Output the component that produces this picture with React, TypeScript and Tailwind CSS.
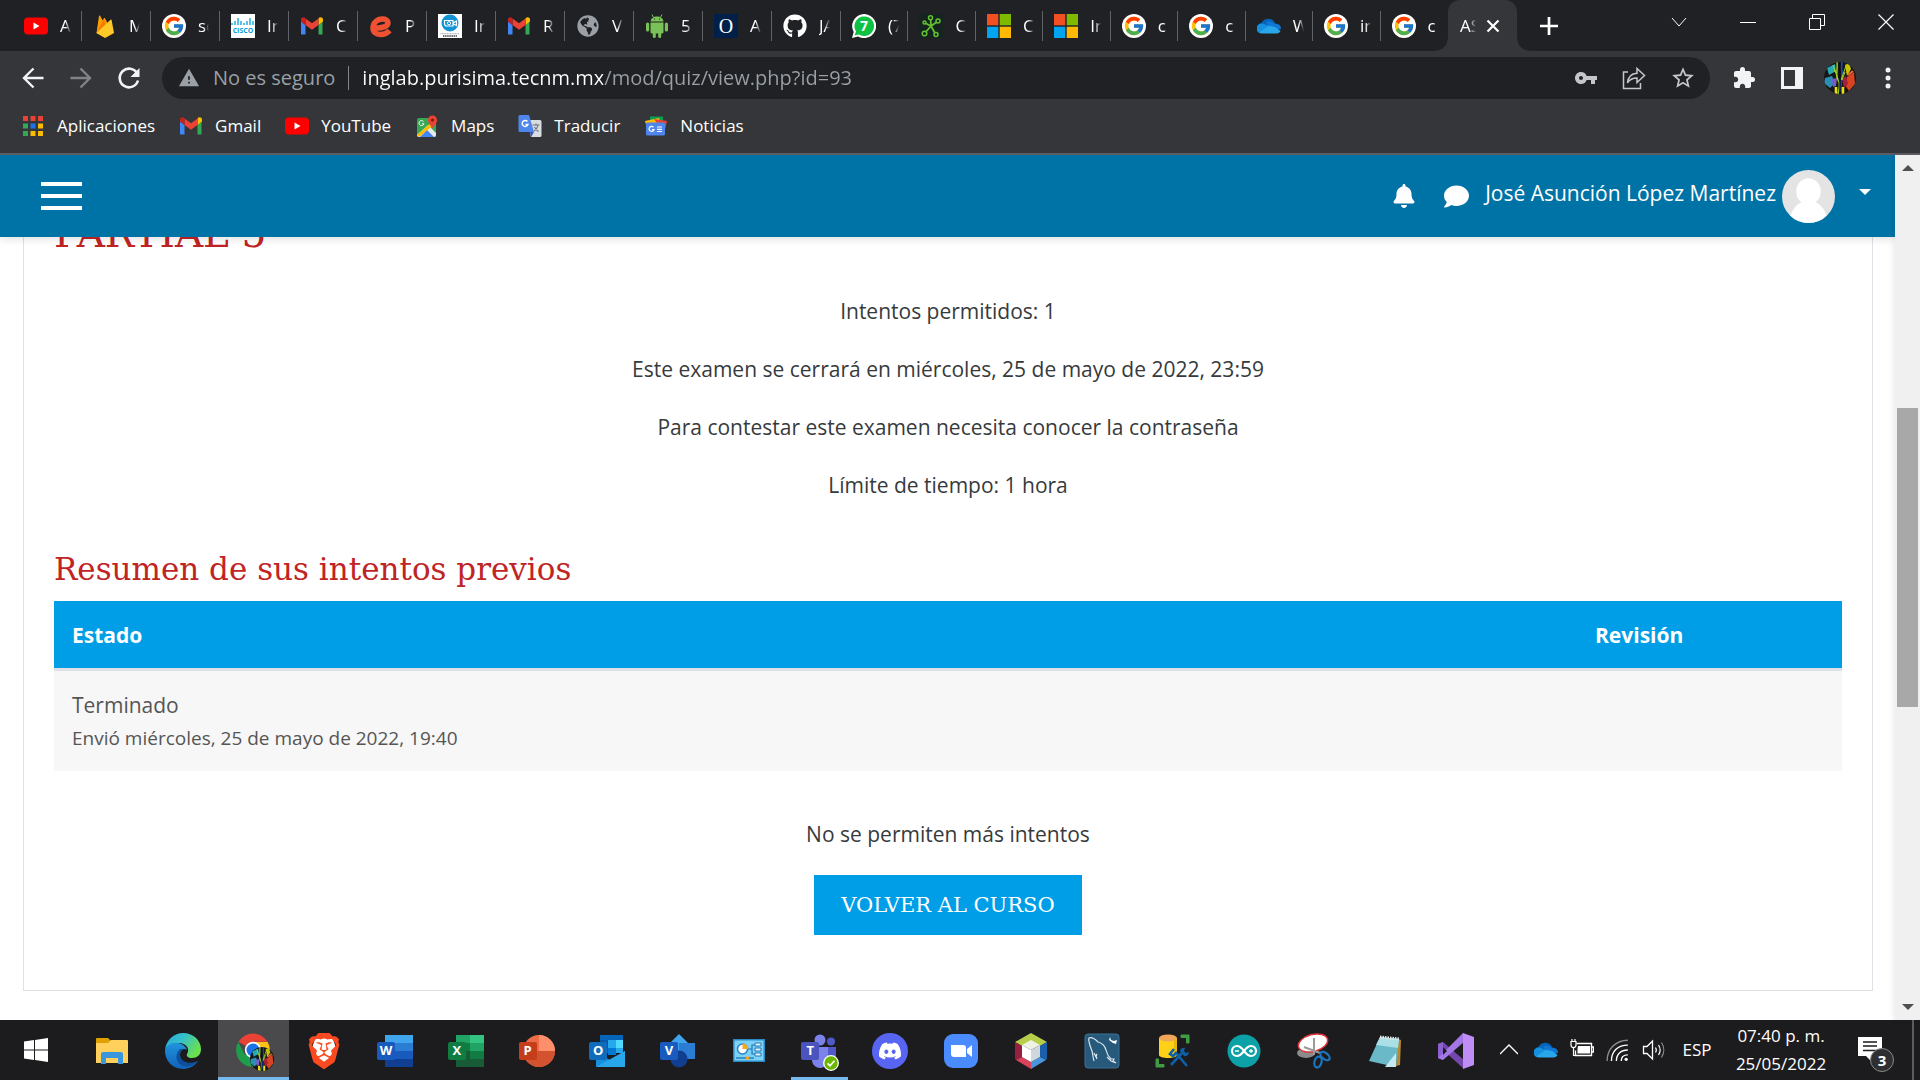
import React from "react";
import { FcGoogle } from "react-icons/fc";
import { FaBell, FaComment, FaDiscord, FaGithub, FaGlobeAmericas } from "react-icons/fa";
import { SiBrave } from "react-icons/si";
import { MdWarning, MdVpnKey, MdStarBorder, MdExtension } from "react-icons/md";

type Box = { children: React.ReactNode; className?: string; vb?: string };

function Svg({ children, className = "size-6", vb = "0 0 24 24" }: Box) {
  return (
    <svg viewBox={vb} className={className + " shrink-0"} fill="none" aria-hidden="true">
      {children}
    </svg>
  );
}

function App36({ children }: { children: React.ReactNode }) {
  return <Svg vb="0 0 36 36" className="size-9">{children}</Svg>;
}

/* ---------- favicons ---------- */

const YouTube = () => (
  <Svg>
    <rect x="0" y="3.500" width="24" height="17" rx="4" fill="#f00" />
    <path d="M9.500 8.500v7l6-3.500z" fill="#fff" />
  </Svg>
);
const Firebase = () => (
  <Svg>
    <path d="M3.500 19 6 2c.1-.6.8-.7 1.100-.2l2.600 4.800L11 4.300c.3-.5.8-.5 1 0L19.500 19 12 23.500z" fill="#ffa000" />
    <path d="M3.500 19 13.500 11 11 5.500 9.700 6.700z" fill="#f57c00" />
    <path d="M3.500 19 17.500 5.800c.4-.4 1-.2 1.100.3L21 19l-8 4.500c-.6.3-1.200.3-1.800 0z" fill="#ffca28" />
  </Svg>
);
const GoogleG = () => (
  <span className="flex size-6 shrink-0 items-center justify-center rounded-full bg-white">
    <FcGoogle className="size-[22px]" />
  </span>
);
const Cisco = () => (
  <span className="flex size-6 shrink-0 flex-col items-center justify-center bg-white">
    <Svg vb="0 0 24 10" className="h-[10px] w-6">
      <path d="M1 7v2M4 5v4M7 2v7M10 5v4M13 7v2M16 5v4M19 2v7M22 5v4" stroke="#049fd9" strokeWidth="1.300" />
    </Svg>
    <span className="text-[7px] leading-[9px] font-bold text-[#049fd9]">CISCO</span>
  </span>
);
const Gmail = () => (
  <Svg>
    <path d="M1.500 20.500h4V11L1 7.500V20z" fill="#4285f4" />
    <path d="M18.500 20.500h4V7.500L18.500 11z" fill="#34a853" />
    <path d="M18.500 4.500V11L23 7.500V5.500c0-2.200-2.500-3-4-1.800z" fill="#fbbc04" />
    <path d="M5.500 11V4.500L12 9.300l6.500-4.800V11L12 15.800z" fill="#ea4335" />
    <path d="M1 5.500v2L5.500 11V4.200L5 3.700C3.500 2.500 1 3.300 1 5.500z" fill="#c5221f" />
  </Svg>
);
const Swirl = () => (
  <Svg>
    <path d="M4 13.500C14 15 19 12 19 8.800 19 6.500 16.500 5 13.500 5 8 5 4 9 4 14c0 4 3 6.500 7.500 6.500 4 0 7-1.500 9-4" stroke="#f05133" strokeWidth="5.500" />
  </Svg>
);
const Camera = () => (
  <Svg>
    <rect width="24" height="24" fill="#fff" />
    <circle cx="12" cy="9" r="8.500" fill="#1193d4" />
    <path d="M6.500 6.500h8.500v5.500H9A2.500 2.500 0 0 1 6.500 9.500zM15.500 8.700l3-1.700v4.500l-3-1.500z" stroke="#fff" strokeWidth="1.200" />
    <circle cx="11" cy="9.200" r="1.600" stroke="#fff" />
    <path d="M2.500 19.700h19" stroke="#9aa0a6" strokeWidth="1" strokeDasharray="1 .6" />
    <path d="M5 22h14" stroke="#444" strokeWidth="1.500" strokeDasharray="1.500 .6" />
  </Svg>
);
const Android = () => (
  <Svg>
    <g fill="#78c257">
      <path d="M5.500 7.500C5.800 4.500 8.500 2.500 12 2.500s6.200 2 6.500 5z" />
      <path d="M5.500 8.500h13V18a1.500 1.500 0 0 1-1.500 1.500H7A1.500 1.500 0 0 1 5.500 18z" />
      <rect x="1" y="8.500" width="3.200" height="9" rx="1.600" />
      <rect x="19.800" y="8.500" width="3.200" height="9" rx="1.600" />
      <rect x="7.800" y="16" width="3" height="8" rx="1.500" />
      <rect x="13.200" y="16" width="3" height="8" rx="1.500" />
    </g>
    <path d="m8.500 3.500-1.500-3m8.500 3 1.500-3" stroke="#78c257" />
    <path d="M9 5h1m4 0h1" stroke="#202124" />
  </Svg>
);
const Oracle = () => (
  <span className="flex size-6 shrink-0 items-center justify-center bg-[#00204a] font-['Liberation_Serif',serif] text-[20px] leading-none text-white">O</span>
);
const WhatsApp = () => (
  <span className="relative flex size-6 shrink-0 items-center justify-center">
    <Svg>
      <path d="M0 24 1.700 18A12 12 0 1 1 6 22.400z" fill="#fff" />
      <path d="M2.500 21.500 4 17.500A9.800 9.800 0 1 1 7 20.500z" fill="#0fc143" />
    </Svg>
    <span className="absolute text-[14px] leading-none font-bold text-white">7</span>
  </span>
);
const Graph = () => (
  <Svg>
    <rect width="24" height="24" fill="#16241f" />
    <path d="M11.500 4 12 12 18.500 7.500M12 12l-6.500 7.500M12 12l4.500 8M12 12 6 9" stroke="#62c22f" strokeWidth="1.800" />
    <g stroke="#62c22f" strokeWidth="1.500" fill="#16241f">
      <circle cx="11.500" cy="3.800" r="2" /><circle cx="19" cy="7" r="2" /><circle cx="5.500" cy="19.500" r="2.300" /><circle cx="17" cy="20.500" r="2" /><circle cx="5.500" cy="8.500" r="1.500" />
    </g>
  </Svg>
);
const Microsoft = () => (
  <Svg>
    <path d="M0 0h11.300v11.300H0z" fill="#f25022" /><path d="M12.700 0H24v11.300H12.700z" fill="#7fba00" />
    <path d="M0 12.700h11.300V24H0z" fill="#00a4ef" /><path d="M12.700 12.700H24V24H12.700z" fill="#ffb900" />
  </Svg>
);
const OneDrive = () => (
  <Svg>
    <path d="M5 19a5 5 0 0 1-.5-10A7.500 7.500 0 0 1 17.500 8L20 12l-8 7z" fill="#0364b8" />
    <path d="M9 8.500c2.500-1.500 7-.5 8.500 1.500A5 5 0 0 1 24 15l-9 2z" fill="#0f78d4" />
    <path d="M5 19.500c-2.500 0-4.500-1.500-5-3.500l10-4.500 8 1.500 5.500 4c-.7 1.600-2 2.500-4 2.500z" fill="#28a8ea" />
    <path d="M0 15.500A4.800 4.800 0 0 1 5 9.500c2.500 0 4 1.500 6 3L2 18.500c-1-.7-1.700-1.800-2-3z" fill="#1490df" />
  </Svg>
);

type TabItem = { title: string; icon: React.ReactNode };
const firstTabs: TabItem[] = [
  { title: "A", icon: <YouTube /> },
  { title: "M", icon: <Firebase /> },
  { title: "so", icon: <GoogleG /> },
  { title: "In", icon: <Cisco /> },
  { title: "C", icon: <Gmail /> },
  { title: "P", icon: <Swirl /> },
  { title: "In", icon: <Camera /> },
  { title: "R", icon: <Gmail /> },
  { title: "V", icon: <FaGlobeAmericas className="size-[22px] shrink-0 text-[#9aa0a6]" /> },
  { title: "5", icon: <Android /> },
  { title: "A", icon: <Oracle /> },
  { title: "JA", icon: <FaGithub className="size-6 shrink-0 text-white" /> },
];
const lastTabs: TabItem[] = [
  { title: "(7", icon: <WhatsApp /> },
  { title: "C", icon: <Graph /> },
  { title: "C", icon: <Microsoft /> },
  { title: "In", icon: <Microsoft /> },
  { title: "c", icon: <GoogleG /> },
  { title: "c", icon: <GoogleG /> },
  { title: "W", icon: <OneDrive /> },
  { title: "in", icon: <GoogleG /> },
  { title: "c", icon: <GoogleG /> },
];

function Tab({ title, icon, last }: TabItem & { last?: boolean }) {
  return (
    <button className={"flex h-[30px] min-w-0 flex-1 items-center gap-3 border-r pl-[11px] " + (last ? "border-transparent" : "border-[#5f6368]")}>
      <span className="flex w-6 shrink-0 justify-center">{icon}</span>
      <span className="w-[11px] overflow-hidden [mask-image:linear-gradient(90deg,#000_50%,transparent)] text-left text-[17px] leading-6">{title}</span>
    </button>
  );
}

function TabStrip() {
  return (
    <div className="flex h-[51px] items-center bg-[#202124] pl-[13px]">
      <div className="flex w-[828px]">{firstTabs.map((t, i) => <Tab key={i} {...t} />)}</div>
      <div className="flex w-[607px]">{lastTabs.map((t, i) => <Tab key={i} {...t} last={i === 8} />)}</div>
      <div className="flex h-full items-end">
        <span className="-ml-3 size-3 bg-[radial-gradient(circle_at_0_0,transparent_11px,#35363a_12px)]" />
        <div className="flex h-full w-[69px] items-center gap-2 rounded-t-xl bg-[#35363a] pl-3">
          <span className="w-4 overflow-hidden [mask-image:linear-gradient(90deg,#000_60%,transparent)] text-[17px] leading-6">AS</span>
          <button aria-label="Cerrar pestaña">
            <Svg vb="0 0 18 18" className="size-[18px]"><path d="m3.500 3.500 11 11m0-11-11 11" stroke="#fff" strokeWidth="2.200" /></Svg>
          </button>
        </div>
        <span className="size-3 bg-[radial-gradient(circle_at_100%_0,transparent_11px,#35363a_12px)]" />
      </div>
      <button aria-label="Nueva pestaña" className="ml-2.5">
        <Svg vb="0 0 20 20" className="size-5"><path d="M10 1v18M1 10h18" stroke="#fff" strokeWidth="2.700" /></Svg>
      </button>
      <div className="ml-auto flex pb-2">
        <button aria-label="Buscar pestañas" className="flex w-[69px] justify-center">
          <Svg vb="0 0 16 16" className="size-4"><path d="m1 4 7 8 7-8" stroke="#fff" strokeWidth="1" /></Svg>
        </button>
        <button aria-label="Minimizar" className="flex w-[69px] justify-center">
          <Svg vb="0 0 16 16" className="size-4"><path d="M0 8.500h16" stroke="#fff" /></Svg>
        </button>
        <button aria-label="Restaurar" className="flex w-[69px] justify-center">
          <Svg vb="0 0 16 16" className="size-4"><path d="M.5 4.500h11v11H.5zM3.500 4.500v-4h12v11h-4" stroke="#fff" /></Svg>
        </button>
        <button aria-label="Cerrar" className="flex w-[69px] justify-center">
          <Svg vb="0 0 16 16" className="size-4"><path d="m.5.5 15 15m0-15-15 15" stroke="#fff" strokeWidth="1.200" /></Svg>
        </button>
      </div>
    </div>
  );
}

function Toolbar() {
  return (
    <div className="flex items-center pt-1.5 pr-2 pl-[21px]">
      <button aria-label="Atrás" className="mr-6">
        <Svg><path d="M22.500 12H3.500m9-9.500L3 12l9.500 9.500" stroke="#f1f3f4" strokeWidth="2.400" /></Svg>
      </button>
      <button aria-label="Adelante" className="mr-6">
        <Svg><path d="M1.500 12h19m-9-9.500L21 12l-9.500 9.500" stroke="#808387" strokeWidth="2.400" /></Svg>
      </button>
      <button aria-label="Volver a cargar" className="mr-[21px]">
        <Svg>
          <path d="M20.200 7.500A9.300 9.300 0 1 0 21 14.500" stroke="#f1f3f4" strokeWidth="2.600" />
          <path d="M22.500 2v9h-9z" fill="#f1f3f4" />
        </Svg>
      </button>
      <div className="flex h-[42px] flex-1 items-center rounded-full bg-[#202124] pr-3.5 pl-4">
        <MdWarning className="size-[22px] text-[#9aa0a6]" />
        <span className="ml-[13px] text-[20px] text-[#9aa0a6]">No es seguro</span>
        <span className="mx-[13px] h-6 w-px bg-[#80868b]" />
        <input
          aria-label="Dirección"
          defaultValue="inglab.purisima.tecnm.mx/mod/quiz/view.php?id=93"
          className="min-w-0 flex-1 bg-[linear-gradient(90deg,#fff_241px,#9aa0a6_241px)] bg-clip-text text-[20px] text-transparent outline-none"
        />
        <div className="flex items-center gap-6 text-[#c4c7ca]">
          <button aria-label="Contraseñas"><MdVpnKey className="size-6" /></button>
          <button aria-label="Compartir">
            <Svg>
              <path d="M6 6H1.500v16.500h17V17" stroke="currentColor" strokeWidth="1.500" />
              <path d="M5.500 17c.5-6 4-9.500 9.500-9.800V2.500l7.500 7-7.500 7V12c-4.500 0-7.500 1.500-9.500 5z" stroke="currentColor" strokeWidth="1.500" />
            </Svg>
          </button>
          <button aria-label="Marcador"><MdStarBorder className="size-[26px]" /></button>
        </div>
      </div>
      <div className="flex items-center pl-2.5 text-[#f1f3f4]">
        <button aria-label="Extensiones" className="flex w-12 justify-center"><MdExtension className="size-6" /></button>
        <button aria-label="Panel lateral" className="flex w-12 justify-center">
          <Svg vb="0 0 22 22" className="size-[22px]"><path d="M0 0h22v22H0z" fill="#f1f3f4" /><path d="M3 3h11v16H3z" fill="#35363a" /></Svg>
        </button>
        <button aria-label="Perfil" className="flex w-12 justify-center">
          <ProfileArt className="size-8" />
        </button>
        <button aria-label="Menú" className="flex w-12 justify-center">
          <Svg vb="0 0 6 24" className="h-6 w-1.5">
            <circle cx="3" cy="4" r="2.500" fill="#f1f3f4" /><circle cx="3" cy="12" r="2.500" fill="#f1f3f4" /><circle cx="3" cy="20" r="2.500" fill="#f1f3f4" />
          </Svg>
        </button>
      </div>
    </div>
  );
}

function ProfileArt({ className }: { className: string }) {
  return (
    <Svg vb="0 0 32 32" className={className + " rounded-full"}>
      <path d="M0 0h32v32H0z" fill="#161616" />
      <path d="M3 6 11 2l1 7-7 4z" fill="#25a9b5" />
      <path d="M1 16l7-2 3 7-5 5-6-5z" fill="#2b8fb5" />
      <path d="M8 17l5-1-1 8-3 1z" fill="#7b5ac8" />
      <path d="m21 3 4-2 2 6-4 7z" fill="#c9c400" />
      <path d="m23 15 7-5 1 12-6 7-4-6z" fill="#d84421" />
      <path d="m18 17 4-3 2 8-4 4z" fill="#a81f3a" />
      <path d="m24 13 5-4" stroke="#f0672f" strokeWidth="2" />
      <path d="M13 0c1 9-2 14 1 18s1 9 0 14" stroke="#8fc61a" strokeWidth="1.600" />
      <path d="M18 0c-2 8 2 12-1 20v10" stroke="#1a49c7" strokeWidth="1.800" />
      <path d="M12 25v7M19 25v7" stroke="#e9dc17" strokeWidth="2.600" />
      <path d="m9 3 5 14M22 4l-5 14M10 9l3 2M21 10l-3 8" stroke="#a9d321" strokeWidth="1" />
      <path d="M16 1v30" stroke="#0d0d0d" strokeWidth="1.200" />
    </Svg>
  );
}

const AppsIcon = () => (
  <Svg vb="0 0 20 20" className="size-5">
    {["#ea4335", "#ea4335", "#ea4335", "#34a853", "#1a73e8", "#fbbc04", "#34a853", "#fbbc04", "#fbbc04"].map((c, i) => (
      <rect key={i} x={(i % 3) * 7.500} y={Math.floor(i / 3) * 7.500} width="5" height="5" fill={c} />
    ))}
  </Svg>
);
const MapsIcon = () => (
  <Svg>
    <rect x="2" y="4" width="19" height="19" rx="2" fill="#34a853" />
    <path d="M2 21 13 11l8 8v2a2 2 0 0 1-2 2H4a2 2 0 0 1-2-2z" fill="#e8eaed" />
    <path d="m5 23 7-7 7 7z" fill="#4285f4" />
    <path d="M2 21 20 5l1 4L4 23z" fill="#fbbc04" />
    <path d="M17.500 15c-.5-3-4.500-5-4.500-9a4.500 4.500 0 1 1 9 0c0 4-4 6-4.500 9z" fill="#ea4335" />
    <circle cx="17.500" cy="6" r="1.600" fill="#7b1a12" />
    <path d="M8.500 7.500A2.500 2.500 0 1 0 9 9.800H7" stroke="#fff" strokeWidth="1" />
  </Svg>
);
const TranslateIcon = () => (
  <Svg>
    <path d="M9 6h13a1.500 1.500 0 0 1 1.500 1.500v14A1.500 1.500 0 0 1 22 23h-9z" fill="#d9dce0" />
    <path d="M2 1h9l5 17H2a1.500 1.500 0 0 1-1.500-1.500v-14A1.500 1.500 0 0 1 2 1z" fill="#4f86ec" />
    <path d="m12 18 4 0-3 5z" fill="#3b50c4" />
    <path d="M9.500 7.500A3 3 0 1 0 10 10.500H7.500" stroke="#fff" strokeWidth="1.400" />
    <path d="M14.500 11h7M18 9.500V11m2 0c-.5 3-2.500 5-4 6m.5-4c1 2 2.500 3.500 4 4.500" stroke="#69737d" strokeWidth="1.100" />
  </Svg>
);
const NewsIcon = () => (
  <Svg>
    <path d="M6 2.500h13v6H6z" fill="#0c9d58" />
    <path d="m1 7 14-3 2 6-14 4z" fill="#fbbc04" />
    <path d="m10 5 13 2-3 13z" fill="#ea4335" />
    <rect x="2" y="8.500" width="19" height="13" rx="1.500" fill="#4f86ec" />
    <path d="M9.500 13.200A2.500 2.500 0 1 0 10 15.500H8M13 13h5m-5 2.300h5M13 17.500h5" stroke="#fff" strokeWidth="1.200" />
  </Svg>
);

const bookmarks = [
  { label: "Aplicaciones", icon: <AppsIcon /> },
  { label: "Gmail", icon: <Gmail /> },
  { label: "YouTube", icon: <YouTube /> },
  { label: "Maps", icon: <MapsIcon /> },
  { label: "Traducir", icon: <TranslateIcon /> },
  { label: "Noticias", icon: <NewsIcon /> },
];

function Bookmarks() {
  return (
    <nav className="flex h-[54px] items-center gap-6 pl-[21px]">
      {bookmarks.map((b) => (
        <a key={b.label} href="#" className="flex items-center">
          <span className="mr-3 flex w-6 justify-center">{b.icon}</span>
          <span className="text-[17px] leading-6">{b.label}</span>
        </a>
      ))}
    </nav>
  );
}

/* ---------- page ---------- */

function SiteHeader() {
  return (
    <header className="relative z-10 flex h-[82px] shrink-0 items-center bg-[#0073a6] pr-6 pl-[41px] text-white shadow-[0_2px_8px_rgba(0,0,0,0.12)]">
      <button aria-label="Abrir menú" className="flex w-[41px] flex-col gap-2">
        <span className="h-1 bg-white" />
        <span className="h-1 bg-white" />
        <span className="h-1 bg-white" />
      </button>
      <div className="ml-auto flex items-center">
        <button aria-label="Notificaciones"><FaBell className="size-6" /></button>
        <button aria-label="Mensajes" className="ml-7"><FaComment className="size-[25px]" /></button>
        <button className="ml-4 flex items-center text-[21px]">
          <span className="pb-1">José Asunción López Martínez</span>
          <Svg vb="0 0 52 52" className="ml-1.5 size-[53px] rounded-full">
            <path d="M0 0h52v52H0z" fill="#e4e4e4" />
            <ellipse cx="26" cy="21" rx="12" ry="13" fill="#fff" />
            <path d="M7 52c1-12 7-19 14-21h10c7 2 13 9 14 21z" fill="#fff" />
          </Svg>
          <Svg vb="0 0 12 6" className="mb-2 ml-6 h-1.5 w-3"><path d="M0 0h12L6 6z" fill="#fff" /></Svg>
        </button>
      </div>
    </header>
  );
}

const info = [
  "Intentos permitidos: 1",
  "Este examen se cerrará en miércoles, 25 de mayo de 2022, 23:59",
  "Para contestar este examen necesita conocer la contraseña",
  "Límite de tiempo: 1 hora",
];

function QuizCard() {
  return (
    <main className="mr-[22px] mb-[29px] ml-[23px] flex-1 border border-t-0 border-[#dee2e6] px-[30px] text-[21px] leading-[34px] text-[#373a3c]">
      <h2 className="-mt-[27px] mb-9 font-['DejaVu_Serif',serif] text-[39px] leading-[48px] text-[#c02424]">PARTIAL 5</h2>
      <div className="flex flex-col gap-6 text-center">
        {info.map((t) => <p key={t}>{t}</p>)}
      </div>
      <h3 className="mt-[47px] mb-3 font-['DejaVu_Serif',serif] text-[31px] leading-10 text-[#c02424]">Resumen de sus intentos previos</h3>
      <table className="w-full text-left">
        <thead>
          <tr className="border-b-[3px] border-[#dee2e6] bg-[#009ee7] text-white">
            <th className="px-[18px] pt-[17px] pb-4 font-bold">Estado</th>
            <th className="w-[265px] px-[18px] pt-[17px] pb-4 font-bold">Revisión</th>
          </tr>
        </thead>
        <tbody>
          <tr className="bg-[#f7f7f7] text-[#555]">
            <td className="px-[18px] py-[17px]">
              Terminado
              <span className="block text-[19px] leading-8">Envió miércoles, 25 de mayo de 2022, 19:40</span>
            </td>
            <td />
          </tr>
        </tbody>
      </table>
      <div className="mt-[46px] flex flex-col items-center gap-6">
        <p>No se permiten más intentos</p>
        <button className="h-[60px] bg-[#009ee7] px-[27px] font-['DejaVu_Serif',serif] text-[21px] text-white">VOLVER AL CURSO</button>
      </div>
    </main>
  );
}

function ScrollBar() {
  return (
    <div className="z-20 flex w-[25px] flex-col items-center bg-[#f0f0f0] py-2.5 shadow-[-2px_0_6px_rgba(0,0,0,0.08)]">
      <Svg vb="0 0 12 6" className="h-1.5 w-3"><path d="M0 6h12L6 0z" fill="#505050" /></Svg>
      <div className="w-full flex-[237]" />
      <div className="w-[21px] flex-[299] bg-[#a8a8a8]" />
      <div className="w-full flex-[297]" />
      <Svg vb="0 0 12 6" className="h-1.5 w-3"><path d="M0 0h12L6 6z" fill="#505050" /></Svg>
    </div>
  );
}

/* ---------- taskbar ---------- */

function Office({ letter, tile, children }: { letter: string; tile: string; children: React.ReactNode }) {
  return (
    <span className="relative flex size-9 items-center">
      <App36>{children}</App36>
      <span className={"absolute left-0 flex size-[18px] items-center justify-center rounded-[2px] text-[13px] leading-none font-bold text-white " + tile}>{letter}</span>
    </span>
  );
}

const apps: { name: string; icon: React.ReactNode; state?: "active" | "open" }[] = [
  {
    name: "Explorador de archivos",
    icon: (
      <App36>
        <path d="M2 6a1 1 0 0 1 1-1h11l3 3v5H2z" fill="#e0a100" />
        <path d="M2 10h12l3-3h16a1 1 0 0 1 1 1v22H2z" fill="#ffd15c" />
        <path d="M7 31V21a2 2 0 0 1 2-2h18a2 2 0 0 1 2 2v10h-5v-6H12v6z" fill="#3a97dd" />
      </App36>
    ),
  },
  {
    name: "Microsoft Edge",
    icon: (
      <App36>
        <defs>
          <linearGradient id="edgeTop" x1="0" y1="0" x2="1" y2=".5"><stop stopColor="#2aa5dd" /><stop offset=".5" stopColor="#35c1c9" /><stop offset="1" stopColor="#6be04d" /></linearGradient>
          <linearGradient id="edgeLow" x1="0" y1="0" x2="0" y2="1"><stop stopColor="#1f95de" /><stop offset="1" stopColor="#1160b7" /></linearGradient>
        </defs>
        <path d="M0 17C1 7 9 0 18 0c11 0 18 8 18 16 0 6-4 9-9 9-4 0-6-2-5-4 3-5 0-10-7-11-7 0-13 3-15 7z" fill="url(#edgeTop)" />
        <path d="M0 18c1-6 7-9 13-8 5 1 8 4 9 7-2-2-7-1-7 5 0 7 8 11 18 6-4 6-10 8-15 8C7 36 0 27 0 18z" fill="url(#edgeLow)" />
        <path d="M15 16c-3 3-5 8-2 13 4 6 14 6 20-1-8 4-18 1-18-6 0-3 1-5 3-6z" fill="#0d4f9c" />
      </App36>
    ),
  },
  {
    name: "Google Chrome",
    state: "active",
    icon: (
      <span className="relative size-9">
        <App36>
          <path d="M17 17 2.500 8.700A17 17 0 0 1 31.500 8.700H17z" fill="#ea4335" />
          <path d="M17 17 9 22 2.200 9A17 17 0 0 0 15 34l8-14z" fill="#1e9e4a" />
          <path d="M17 9h14.700A17 17 0 0 1 16 34l8-13z" fill="#fbc116" />
          <circle cx="17" cy="17" r="8.200" fill="#fff" /><circle cx="17" cy="17" r="6.500" fill="#1a73e8" />
        </App36>
        <span className="absolute top-3.5 left-3.5"><ProfileArt className="size-6" /></span>
      </span>
    ),
  },
  {
    name: "Brave",
    icon: (
      <span className="relative flex size-9 items-center justify-center">
        <Svg vb="0 0 36 36" className="absolute size-9"><path d="m9 6 9-2 9 2 3 9-5 11-7 6-7-6-5-11z" fill="#fff" /></Svg>
        <SiBrave className="relative size-9 text-[#fb4a1f]" />
      </span>
    ),
  },
  {
    name: "Word",
    icon: (
      <Office letter="W" tile="bg-[#185abd]">
        <path d="M8 2h28v8H8z" fill="#41a5ee" /><path d="M8 10h28v8H8z" fill="#2b7cd3" /><path d="M8 18h28v8H8z" fill="#185abd" /><path d="M8 26h28v8H8z" fill="#103f91" />
      </Office>
    ),
  },
  {
    name: "Excel",
    icon: (
      <Office letter="X" tile="bg-[#107c41]">
        <path d="M8 2h28v8H8z" fill="#21a366" /><path d="M22 2h14v8H22z" fill="#33c481" /><path d="M8 10h28v8H8z" fill="#107c41" /><path d="M22 10h14v8H22z" fill="#21a366" /><path d="M8 18h28v16H8z" fill="#185c37" /><path d="M22 18h14v8H22z" fill="#107c41" />
      </Office>
    ),
  },
  {
    name: "PowerPoint",
    icon: (
      <Office letter="P" tile="bg-[#c43e1c]">
        <circle cx="20" cy="18" r="16" fill="#ed6c47" /><path d="M20 2a16 16 0 0 1 16 16H20z" fill="#ff8f6b" /><path d="M36 18a16 16 0 0 1-32 0z" fill="#d35230" />
      </Office>
    ),
  },
  {
    name: "Outlook",
    icon: (
      <Office letter="O" tile="bg-[#0f6cbd]">
        <path d="M11 2h23v18H11z" fill="#0364b8" /><path d="M11 7h8v8h-8z" fill="#0358a7" /><path d="M19 7h8v8h-8z" fill="#28a8ea" /><path d="M27 7h7v8h-7z" fill="#50d9ff" /><path d="M19 15h8v7h-8z" fill="#0078d4" /><path d="M27 15h7v5h-7z" fill="#28a8ea" />
        <path d="M7 19 21 27 36 18v15a1 1 0 0 1-1 1H8a1 1 0 0 1-1-1z" fill="#1490df" /><path d="m7 34 29-16v15a1 1 0 0 1-1 1z" fill="#28a8ea" />
      </Office>
    ),
  },
  {
    name: "Visio",
    icon: (
      <Office letter="V" tile="bg-[#185abd]">
        <path d="m19 1 9 9-9 9-9-9z" fill="#41a5ee" /><path d="M19 10h16v16H19z" fill="#2b7cd3" /><circle cx="19" cy="26" r="8.500" fill="#103f91" />
      </Office>
    ),
  },
  {
    name: "Panel de control",
    icon: (
      <App36>
        <rect x="2" y="6" width="32" height="23" fill="#2a8ac4" /><rect x="3.500" y="7.500" width="29" height="20" fill="#7cd3f7" />
        <circle cx="11.500" cy="16" r="5" fill="#fff" stroke="#2d7fc0" strokeWidth="1.500" /><path d="M11.500 10.500v5.500h6a6 6 0 0 0-6-5.500z" fill="#f6a821" />
        <path d="M17 16h4v-4h3m-3 4v5h3" stroke="#2277b5" strokeWidth="1.200" /><path d="M24 10h6v3h-6zm0 5h6v3h-6zm0 5h6v3h-6z" fill="#e8f7ff" stroke="#2277b5" />
        <path d="M5 25h18" stroke="#2d7fc0" strokeWidth="1.500" /><path d="M15 23.500h3v3h-3z" fill="#f6a821" />
      </App36>
    ),
  },
  {
    name: "Teams",
    state: "open",
    icon: (
      <span className="relative flex size-9 items-center">
        <App36>
          <circle cx="19" cy="7" r="5.500" fill="#7b83eb" /><circle cx="30" cy="8.500" r="4" fill="#5059c9" />
          <path d="M26 14h9v10a6 6 0 0 1-9 5z" fill="#5059c9" /><path d="M11 14h16v12a8 8 0 0 1-16 2z" fill="#7b83eb" />
        </App36>
        <span className="absolute left-0 flex size-[18px] items-center justify-center rounded-[2px] bg-[#4b53bc] text-[13px] leading-none font-bold text-white">T</span>
        <span className="absolute -right-0.5 -bottom-0.5">
          <Svg vb="0 0 16 16" className="size-4"><circle cx="8" cy="8" r="7.300" fill="#6bb700" stroke="#fff" strokeWidth="1.300" /><path d="m4.500 8.300 2.500 2.500 4.500-5" stroke="#fff" strokeWidth="1.700" /></Svg>
        </span>
      </span>
    ),
  },
  {
    name: "Discord",
    icon: <span className="flex size-9 items-center justify-center rounded-full bg-[#5865f2] text-white"><FaDiscord className="size-6" /></span>,
  },
  {
    name: "Zoom",
    icon: (
      <App36>
        <rect x="1" y="1" width="34" height="34" rx="9" fill="#4a8cff" />
        <path d="M8 12h12a3 3 0 0 1 3 3v9H11a3 3 0 0 1-3-3zM24 16l5-4v12l-5-4z" fill="#fff" />
      </App36>
    ),
  },
  {
    name: "NetBeans",
    icon: (
      <App36>
        <path d="m18 0 16 9-7 4-9-5-9 5-7-4z" fill="#b7ce4a" /><path d="M2 9l7 4v11l-6 3-1-1z" fill="#95203f" /><path d="m3 27 6-3 9 5v7z" fill="#d9425a" /><path d="M34 9l-7 4v11l6 3 1-1z" fill="#1b5faa" /><path d="m33 27-6-3-9 5v7z" fill="#4b95dc" />
        <path d="m18 7 9 5-9 5-9-5z" fill="#eef2e4" /><path d="m9 12 9 5v12l-9-5z" fill="#fff" /><path d="m27 12-9 5v12l9-5z" fill="#cfd7df" />
      </App36>
    ),
  },
  {
    name: "MySQL Workbench",
    icon: (
      <App36>
        <rect x="1" y="1" width="34" height="34" rx="3" fill="#27597b" stroke="#3d7397" />
        <path d="M10 28c-1-3-1-6-2-10-2-5-4-11-3-13 2-1 6 1 9 4 4 1 7 4 8 8 1 5 3 7 5 9l3 0-1 2 3 2-5-2-4-4M10 20l3 6c-1-2-1-4 0-5" stroke="#d9e6ee" strokeWidth="1.200" />
        <path d="m26 4 1 3 3 1 3-1-1 4-3-1-4-3z" fill="#fff" />
      </App36>
    ),
  },
  {
    name: "SQL Server Management Studio",
    icon: (
      <App36>
        <path d="M26 2h8v8h-2.500V4.500H26zM1 26h2.500v5.500H9V34H1z" fill="#3f9c45" stroke="#3f9c45" />
        <path d="M4 5v17c0 4 18 4 18 0V5z" fill="#fcd116" /><ellipse cx="13" cy="5" rx="9" ry="3.500" fill="#f2a65a" /><path d="M19 7v17l3-2V5z" fill="#e8b70c" />
        <path d="m16 32 11-12M19 16l-4 5 3 2 3-3 11 13" stroke="#0e5fa8" strokeWidth="2.600" /><path d="M25 18c0-2 3-4 5-3l-1 3 2 2 3-1c0 3-3 5-5 4z" fill="#0e5fa8" />
      </App36>
    ),
  },
  {
    name: "Arduino",
    icon: (
      <App36>
        <circle cx="18" cy="18" r="16.500" fill="#0ca1a6" />
        <path d="M18 18c-3-4-5-5-7-5a5 5 0 0 0 0 10c2 0 4-1 7-5zm0 0c3-4 5-5 7-5a5 5 0 0 1 0 10c-2 0-4-1-7-5z" stroke="#fff" strokeWidth="2.200" /><path d="M9 18h4m10 0h4m-2-2v4" stroke="#fff" strokeWidth="1.300" />
      </App36>
    ),
  },
  {
    name: "Recortes",
    icon: (
      <App36>
        <ellipse cx="10" cy="20" rx="9" ry="5" fill="#8b8b8b" />
        <ellipse cx="17" cy="10" rx="15" ry="8.500" fill="#fff" stroke="#e0343a" strokeWidth="1.500" transform="rotate(-15 17 10)" />
        <path d="M18 5v17M8 14l16 6" stroke="#9a9a9a" strokeWidth="2" />
        <ellipse cx="22" cy="29" rx="3.500" ry="5.500" stroke="#1c75bc" strokeWidth="2.200" transform="rotate(15 22 29)" /><ellipse cx="29" cy="23" rx="3" ry="5.500" stroke="#1c75bc" strokeWidth="2.200" transform="rotate(-50 29 23)" />
      </App36>
    ),
  },
  {
    name: "Bloc de notas",
    icon: (
      <App36>
        <path d="m31 6 3 1-1 25-4 1z" fill="#b8892f" /><path d="M13 4 32 6l-3 28-27-6z" fill="#6ab9c9" /><path d="M13 4 32 6l-1 9-22-3z" fill="#a9dfe5" /><path d="m18 34 11-14 0 14z" fill="#c5e9ee" /><path d="M13 4 32 6" stroke="#e7e7e7" strokeWidth="3" strokeDasharray="1.500 1" />
      </App36>
    ),
  },
  {
    name: "Visual Studio",
    icon: (
      <App36>
        <path d="M0 11 5 9l21 18v9L5 17v-6z" fill="#7347ad" /><path d="M0 11 5 9v18l-5-2z" fill="#8d60cf" /><path d="M0 25 25 0l1 9L5 27z" fill="#a377e6" /><path d="m25 0 11 4v28l-11 4z" fill="#c08cf5" /><path d="M25 11v14l-8-7z" fill="#1c1c1e" /><path d="M5 14v8l4-4z" fill="#1c1c1e" />
      </App36>
    ),
  },
];

function Taskbar() {
  return (
    <footer className="flex h-[60px] shrink-0 items-center bg-[#1c1c1e] text-white">
      <button aria-label="Inicio" className="flex h-full w-[77px] items-center pl-6">
        <Svg><path d="M0 3.500 10 2v9.500H0zM11 1.900 24 0v11.500H11zM0 12.500h10V22L0 20.500zM11 12.500h13V24l-13-1.900z" fill="#fff" /></Svg>
      </button>
      <div className="flex h-full w-[1414px]">
        {apps.map((a) => (
          <button key={a.name} aria-label={a.name} className={"flex h-full flex-1 flex-col items-center " + (a.state === "active" ? "bg-[#4a4a4c]" : "")}>
            <span className="flex h-[57px] items-center pt-1">{a.icon}</span>
            {a.state && <span className={"h-[3px] bg-[#76b9ed] " + (a.state === "active" ? "w-full" : "w-[57px]")} />}
          </button>
        ))}
      </div>
      <div className="ml-auto flex h-full items-center">
        <button aria-label="Iconos ocultos"><Svg vb="0 0 18 18" className="size-[18px]"><path d="m0 13 9-9 9 9" stroke="#fff" strokeWidth="1.400" /></Svg></button>
        <button aria-label="OneDrive" className="ml-4"><OneDrive /></button>
        <button aria-label="Batería" className="ml-3">
          <Svg><path d="M6.500 5.500h15v12h-16v-5M22 9h1.500v5H22" stroke="#fff" strokeWidth="1.400" /><path d="M8 8h12v7.500H7.500V11z" fill="#fff" /><path d="M1 3.500h5V7a2.500 2.500 0 0 1-5 0zM2 1v2.500M5 1v2.500M3.500 9.500v8H6" stroke="#fff" strokeWidth="1.200" /></Svg>
        </button>
        <button aria-label="Red" className="ml-3">
          <Svg vb="0 0 22 22" className="size-6"><path d="M1 21C1 10 9 2 20 2" stroke="#8d8d8f" strokeWidth="1.300" /><path d="M5 21C5 12 11 6.500 20 6.500M9.500 21c0-6 4-10 10.500-10M14 21c0-3 2-5.500 6-5.500" stroke="#fff" strokeWidth="1.300" /><circle cx="18.500" cy="19.500" r="1.500" fill="#fff" /></Svg>
        </button>
        <button aria-label="Volumen" className="ml-3">
          <Svg><path d="M1.500 8.500H5L10.500 3v18L5 15.500H1.500z" stroke="#fff" strokeWidth="1.300" /><path d="M13.500 9.500c1 1.500 1 3.500 0 5M16.500 7c2 3 2 7 0 10" stroke="#fff" strokeWidth="1.200" /><path d="M19.500 4.500c3 4.500 3 10.500 0 15" stroke="#8d8d8f" strokeWidth="1.200" /></Svg>
        </button>
        <button className="w-[62px] text-center text-[17px]">ESP</button>
        <button className="w-[106px] text-center text-[17px] leading-7">
          <span className="block">07:40 p. m.</span>
          <span className="block">25/05/2022</span>
        </button>
        <button aria-label="Notificaciones" className="relative mr-[18px] ml-6 size-9">
          <Svg vb="0 0 36 36" className="size-9">
            <path d="M0 5h24v19H13l0 5-5-5H0z" fill="#fff" /><path d="M5 10h14M5 14h14M5 18.500h14" stroke="#1c1c1e" strokeWidth="1.400" />
          </Svg>
          <span className="absolute top-4 left-3 flex size-6 items-center justify-center rounded-full border border-[#8a8a8a] bg-[#2f2f31] text-[15px] leading-none font-bold">3</span>
        </button>
        <span className="mr-1.5 h-full w-0.5 bg-[#5d5d5f]" />
      </div>
    </footer>
  );
}

export default function App() {
  return (
    <div className="flex h-screen flex-col overflow-hidden bg-white font-['Open_Sans','Noto_Sans',sans-serif]">
      <div className="shrink-0 border-b-2 border-[#5d5e62] bg-[#35363a] text-white">
        <TabStrip />
        <Toolbar />
        <Bookmarks />
      </div>
      <div className="flex min-h-0 flex-1">
        <div className="flex min-w-0 flex-1 flex-col overflow-hidden">
          <SiteHeader />
          <QuizCard />
        </div>
        <ScrollBar />
      </div>
      <Taskbar />
    </div>
  );
}
